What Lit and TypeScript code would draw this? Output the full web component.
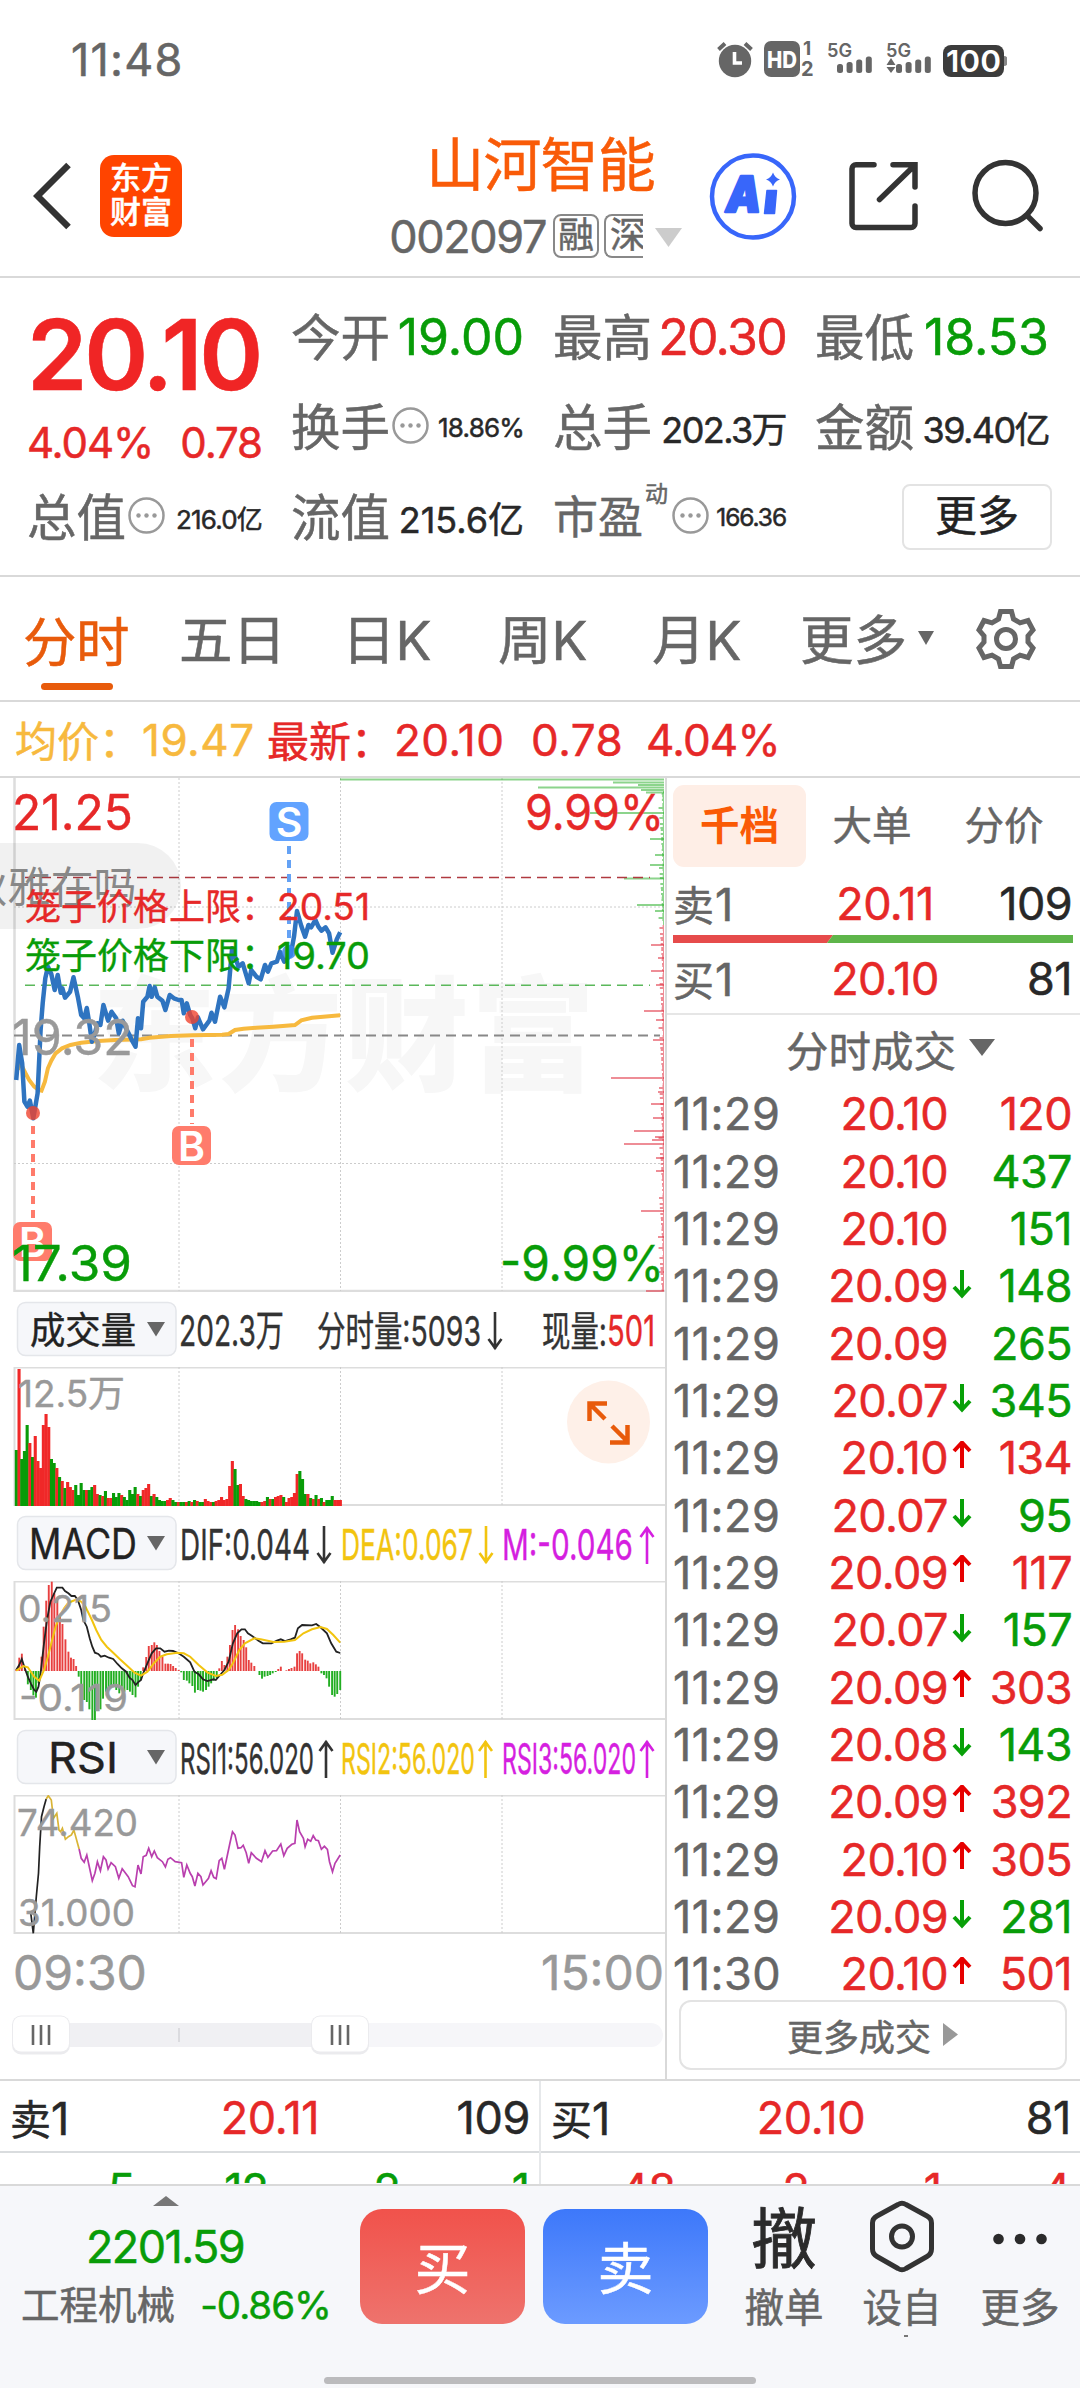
import { LitElement, html, svg, css, nothing } from 'lit';
import { customElement, property } from 'lit/decorators.js';

const RED = '#e62828';
const GREEN = '#089c08';

/* Series are stored on a fine grid: 2.34 units per px across, 3 units per px down. */
const line = (series: string, dy: number) =>
  series
    .trim()
    .split(/\s+/)
    .map((p) => {
      const [x, y] = p.split(',').map(Number);
      return `${(x / 2.34).toFixed(1)},${(y / 3 + dy).toFixed(1)}`;
    })
    .join(' ');

const PRICE = `38,930 42,870 45,825 52,880 57,995 64,1010 70,992 78,1045 88,970 95,780 100,700 106,625 112,590 120,612 128,660
 135,615 142,668 146,655 152,683 164,665 172,622 182,680 190,735 197,745 203,714 209,760 215,815 222,790 228,760 235,765 242,705 253,752
 261,725 272,745 278,790 287,752 293,770 303,795 309,812 317,830 323,745 330,775 335,695 345,680 350,648 355,680 362,652 368,680
 380,692 387,720 397,675 407,685 418,690 425,690 430,730 437,700 445,735 450,745 457,775 463,742 475,778 490,752 495,728
 503,755 515,680 525,712 535,655 543,535 558,590 568,580 582,640 588,600 600,620 610,628 620,585 627,605 635,580 648,575
 655,545 665,575 680,555 688,500 695,423 705,468 714,500 722,465 728,472 738,450 745,470 752,482 762,472 770,490 778,548
 788,508 796,487`;
const AVERAGE = `42,900 46,865 52,890 60,910 68,930 80,950 90,960 97,962 105,935 112,895 120,872 130,850 145,835 165,825 190,818 230,813
 270,810 330,808 350,803 400,798 450,796 520,794 535,792 550,780 570,776 600,773 640,770 690,765 705,751 730,743 796,736`;
const DIF = `38,480 45,465 51,447 58,475 65,500 72,520 80,540 85,545 90,530 95,490 103,400 110,330 118,275 125,255 133,233 146,233
 152,243 160,250 167,258 175,258 182,270 190,300 195,330 203,350 210,385 216,410 222,428 230,432 236,440 245,437 255,443 265,447
 275,462 285,475 295,485 303,503 310,510 317,525 323,517 330,510 335,490 345,460 355,430 365,415 375,415 385,425 395,422 405,423
 418,430 430,440 445,457 455,485 465,493 475,508 485,513 500,508 505,510 515,495 525,480 535,455 545,400 555,370 565,358 573,358
 580,370 590,378 605,392 615,400 635,400 648,392 657,388 667,393 680,388 690,383 697,355 707,345 730,346 740,342 750,352 765,370
 775,400 787,425 796,429`;
const DEA = `38,482 55,468 65,472 80,500 92,512 103,480 112,440 120,400 130,350 140,318 150,295 160,278 180,268 190,275 200,290
 215,330 225,360 237,390 250,410 265,428 280,447 300,470 315,488 330,497 345,485 360,460 375,440 390,433 415,428 430,430 445,440
 465,465 485,487 505,498 520,494 535,480 545,460 560,420 573,400 595,385 610,388 640,396 665,395 690,390 710,370 730,358 750,351
 765,357 780,375 796,398`;
const RSI_A = `72,550 78,610 85,500 90,430 93,350 97,260 103,230 108,207`;
const RSI_B = `108,207 113,197 120,210 125,265 133,250 138,300 142,305 146,295 153,328 160,320 167,315 173,300 185,357`;
const RSI_C = `185,357 190,385 197,397 203,375 209,410 216,452 222,430 228,395 235,422 242,380 248,390 253,417 260,398 270,410
 278,445 286,416 300,440 310,467 316,470 323,405 330,432 335,380 342,376 348,355 355,380 361,363 368,383 380,395 387,411 393,388
 399,383 410,395 425,398 430,442 437,405 445,430 450,440 456,468 463,430 470,440 475,465 488,445 494,422 500,442 506,446 513,392
 519,385 525,418 532,375 538,340 544,305 550,315 557,355 564,353 569,346 576,368 582,400 588,368 600,385 612,395 620,362 627,382
 638,363 647,362 657,342 664,377 672,355 683,343 690,340 695,270 701,305 710,325 714,350 720,328 727,334 733,317 739,330 745,332
 752,358 759,349 766,358 771,395 778,425 784,400 796,375`;

/* One entry per minute: r = up, g = down, followed by the bar height. */
const VOLUME = `g56 r137 g47 g55 g81 r63 g49 r70 r45 r38 r81 r92 r79 g47 g43 r38 g29 r25 g18 r24 r19 r16 g21 g11 g23 g16 r16 g16
 g19 r21 r12 g11 r10 g15 r8 r8 g13 g9 g13 r11 g9 g6 g16 g12 g19 r12 g10 r16 r18 r22 g10 r12 g9 g6 g5 g5 r6 r8 g6 g4 r4 g4 g4 r4 g5
 r4 g6 r5 g4 g4 r7 r5 r4 g4 r5 r6 r9 r6 r7 r20 r45 g37 g21 r22 r10 g7 g6 g5 g5 g5 g4 r4 r5 g9 r7 g7 r9 r10 r11 g9 r4 r8 r9 r13 r32
 g35 g27 g12 r12 g8 r7 g11 r7 g8 r4 g6 g6 g10 r6 r6 r6`.trim().split(/\s+/);

const MACD_BARS = `38,478 45,443 51,431 58,476 65,523 72,540 78,556 84,563 90,520 97,440 102,350 108,272 114,225 121,215 127,250 134,265
 140,320 146,342 153,388 160,425 166,443 172,447 178,468 184,500 190,530 197,570 203,576 209,598 216,630 222,630 228,600 235,598
 241,566 248,545 254,540 260,525 266,530 272,540 279,550 285,530 291,545 298,540 304,545 310,555 317,562 323,530 329,510 335,472
 342,441 348,408 355,405 361,397 367,405 373,423 380,440 387,461 393,461 399,462 405,468 411,474 418,480 424,487 430,510 437,512
 443,520 450,528 456,548 463,540 469,542 475,545 482,540 488,530 494,520 500,512 507,505 513,475 519,453 525,465 532,440 538,405
 544,360 550,345 557,358 563,378 570,390 576,412 582,450 588,458 595,468 607,495 613,506 619,500 626,498 632,495 638,490 645,486
 651,477 657,470 670,481 676,477 682,474 689,470 695,430 701,423 707,430 714,449 720,452 726,460 733,457 739,463 745,470 752,490
 758,495 764,505 770,530 777,555 783,560 789,552 796,540`.trim().split(/\s+/);

/* Price distribution along the right edge: [y, left end]. */
const DEPTH: [number, number][] = [
  [1.5, 340], [4.5, 613], [7, 638], [9.5, 538], [12, 641], [14.5, 646], [35, 590], [61, 650], [77, 655], [87, 650], [100.5, 624],
  [127, 637], [133, 655], [167, 651], [193, 651], [180, 658], [207, 656], [233, 644], [242, 656], [262, 653], [300, 611], [314, 658],
  [326, 651], [340, 653], [353, 634], [359, 655], [362, 652], [366, 624], [380, 656], [393, 656], [433, 641], [459, 658], [494, 659], [513, 646],
];

type Trade = [string, string, number, string, string];
const TRADES: Trade[] = [
  ['11:29', '20.10', 0, '120', 'r'], ['11:29', '20.10', 0, '437', 'g'], ['11:29', '20.10', 0, '151', 'g'],
  ['11:29', '20.09', -1, '148', 'g'], ['11:29', '20.09', 0, '265', 'g'], ['11:29', '20.07', -1, '345', 'g'],
  ['11:29', '20.10', 1, '134', 'r'], ['11:29', '20.07', -1, '95', 'g'], ['11:29', '20.09', 1, '117', 'r'],
  ['11:29', '20.07', -1, '157', 'g'], ['11:29', '20.09', 1, '303', 'r'], ['11:29', '20.08', -1, '143', 'g'],
  ['11:29', '20.09', 1, '392', 'r'], ['11:29', '20.10', 1, '305', 'r'], ['11:29', '20.09', -1, '281', 'g'],
  ['11:30', '20.10', 1, '501', 'r'],
];

const base = css`
  :host { display: block; font-family: Inter, 'Noto Sans CJK SC', sans-serif; color: #666; -webkit-text-stroke: 0.5px; }
  * { box-sizing: border-box; }
  svg { display: block; flex: none; -webkit-text-stroke: 0; }
  svg text { font-family: Inter, 'Noto Sans CJK SC', sans-serif; }
  .r { color: #e62828; }
  .g { color: #089c08; }
  .k { color: #282828; }
`;

const grid = (h: number) => svg`
  <path d="M179 0V${h}M340.5 0V${h}M502 0V${h}" stroke="#ccc" stroke-width="1" stroke-dasharray="2 2"/>`;

/* Text whose glyphs are condensed or stretched to an exact width. */
const label = (s: string, x: number, y: number, w: number, size: number, fill: string, weight = 400) => svg`
  <text x=${x} y=${y} font-size=${size} font-weight=${weight} fill=${fill} stroke=${fill} stroke-width="0.4" textLength=${w} lengthAdjust="spacingAndGlyphs">${s}</text>`;

@customElement('status-bar')
class StatusBar extends LitElement {
  static styles = [base, css`
    .bar { height: 118px; padding: 0 73px 0 71px; display: flex; align-items: center; justify-content: space-between; }
    .time { font-size: 45px; letter-spacing: 1.200px; }
  `];
  render() {
    const bars = (x: number) => [9, 11, 13.5, 16.5].map((h, i) => svg`<rect x=${x + i * 9.6} y=${39 - h} width="6" height=${h} rx="2.500" fill="#666"/>`);
    return html`<div class="bar">
      <span class="time">11:48</span>
      <svg width="292" height="50" viewBox="0 0 292 50">
        <g fill="#666">
          <circle cx="20" cy="27" r="16.200"/>
          <path d="M3.500 15.500 10 9.500M30 9.500l6.500 6" stroke="#666" stroke-width="4"/>
          <path d="M19.500 18V29H27" fill="none" stroke="#fff" stroke-width="3.600"/>
          <rect x="49" y="7" width="36" height="36" rx="7"/>
          <text x="52" y="34" font-size="23" font-weight="800" fill="#fff" textLength="30" lengthAdjust="spacingAndGlyphs">HD</text>
          <text x="88" y="21" font-size="19" font-weight="700">1</text>
          <text x="86" y="42" font-size="20" font-weight="700">2</text>
          <text x="112" y="23" font-size="19" font-weight="600" textLength="25" lengthAdjust="spacingAndGlyphs">5G</text>
          <text x="171" y="23" font-size="19" font-weight="600" textLength="25" lengthAdjust="spacingAndGlyphs">5G</text>
          <path d="M171.500 31l4.500-7 4.500 7zM171.500 33l4.500 6 4.500-6z"/>
        </g>
        ${bars(122)} ${bars(181)}
        <rect x="228" y="11" width="61" height="32" rx="8" fill="#3c3c3c"/>
        <path d="M289 22q4 0 4 5t-4 5z" fill="#888"/>
        <text x="231" y="38" font-size="30" font-weight="600" fill="#fff" textLength="55" lengthAdjust="spacingAndGlyphs">100</text>
      </svg>
    </div>`;
  }
}

@customElement('title-bar')
class TitleBar extends LitElement {
  static styles = [base, css`
    .bar { height: 160px; padding: 0 33px 3px; display: flex; align-items: center; border-bottom: 2px solid #d9d9d9; }
    .logo { width: 82px; height: 82px; margin-left: 29px; border-radius: 14px; background: #ff4400; color: #fff;
      font-size: 31px; font-weight: 500; line-height: 34px; text-align: center; padding-top: 6px; }
    .mid { flex: 1; display: flex; flex-direction: column; align-items: flex-end; padding-right: 24px; }
    .name { font-size: 58px; line-height: 66px; color: #f95b08; margin: 2px 28px 0 0; letter-spacing: -0.8px; }
    .code { display: flex; align-items: center; height: 50px; font-size: 45px; letter-spacing: -1.400px; margin-top: 13px; }
    .tag { width: 46px; height: 44px; margin-left: 7px; border: 2px solid #888; border-radius: 8px; font-size: 36px; line-height: 38px;
      letter-spacing: 0; text-align: center; overflow: hidden; white-space: nowrap; }
    .tag.cut { width: 39px; margin-left: 5px; border-right: 0; border-radius: 8px 0 0 8px; padding-left: 4px; text-align: left; }
    .caret { margin-left: 12px; margin-top: 4px; }
  `];
  render() {
    return html`<div class="bar">
      <svg width="38" height="70" viewBox="0 0 38 70"><path d="M35.500 4 4.500 35 35.500 66" fill="none" stroke="#333" stroke-width="6.500"/></svg>
      <div class="logo">东方<br>财富</div>
      <div class="mid">
        <div class="name">山河智能</div>
        <div class="code">002097<span class="tag">融</span><span class="tag cut">深</span>
          <svg class="caret" width="28" height="20"><path d="M0 0h27L13.500 19z" fill="#ccc"/></svg></div>
      </div>
      <svg width="340" height="90" viewBox="0 0 340 90">
        <circle cx="46" cy="45.500" r="41" fill="none" stroke="#3866fa" stroke-width="4.500"/>
        <text x="19" y="61" font-size="49" font-weight="900" fill="#3866fa" stroke="#3866fa" stroke-width="2.500" stroke-linejoin="round" font-style="italic" textLength="35" lengthAdjust="spacingAndGlyphs">A</text>
        <path d="M60 39.500h9.500L67.500 62.500H57.500z" fill="#3866fa" stroke="#3866fa" stroke-width="1.500" stroke-linejoin="round"/>
        <path d="M66 21.500q2 5.500 7 7-5 1.500-7 7-2-5.500-7-7 5-1.500 7-7z" fill="#3866fa"/>
        <g fill="none" stroke="#333" stroke-width="5.500" stroke-linecap="round" transform="translate(-1 0)">
          <path d="M168 13.700H150a4 4 0 0 0-4 4V72.500a4 4 0 0 0 4 4H205a4 4 0 0 0 4-4V55"/>
          <path d="M187 13.700H209V36M207 16 173.500 48.500"/>
          <circle cx="299.500" cy="42" r="30.500"/>
          <path d="M321 64.500 334 77.500"/>
        </g>
      </svg>
    </div>`;
  }
}

@customElement('quote-panel')
class QuotePanel extends LitElement {
  static styles = [base, css`
    .panel { height: 299px; border-bottom: 2px solid #d9d9d9; padding: 14px 29px 0 29px; display: grid; column-gap: 31px;
      grid-template-columns: 233px 231px 231px 232px; grid-template-rows: 90px 90px 90px; }
    .main { grid-row: span 2; display: flex; flex-direction: column; }
    .last { font-size: 97px; font-weight: 600; letter-spacing: -3.200px; line-height: 118px; margin: 4px 0 0 -2px; color: #f02525; }
    .chg { display: flex; justify-content: space-between; font-size: 42px; line-height: 54px; letter-spacing: -1.100px; margin: 2px 0 0 -2px; }
    .cell { display: flex; align-items: center; justify-content: space-between; font-size: 49.500px; white-space: nowrap; }
    .name { display: flex; align-items: center; padding-bottom: 6px; margin-left: -2px; }
    .big { font-size: 50px; letter-spacing: -1.700px; }
    .mid { font-size: 36px; letter-spacing: -1.600px; }
    .mid.open { letter-spacing: 0; }
    .big.open { letter-spacing: 0; }
    .small { font-size: 26px; letter-spacing: -0.800px; }
    .tiny { font-size: 24.500px; letter-spacing: -1.100px; }
    .sup { font-size: 23px; margin: -44px 2px 0 2px; }
    .pe { font-size: 45px; }
    .more { justify-self: end; align-self: center; width: 150px; height: 66px; border: 2px solid #e3e3e3; border-radius: 8px;
      font-size: 42px; line-height: 60px; text-align: center; color: #222; margin-right: -3px; }
    .info { margin: 3px 0 0 2px; }
  `];
  cell(name: string, value: string, size: string, color: string, info = false) {
    return html`<div class="cell"><span class="name">${name}${info ? this.info() : nothing}</span><span class="${size} ${color}">${value}</span></div>`;
  }
  info() {
    return html`<svg class="info" width="37" height="37"><circle cx="18.500" cy="18.500" r="17" fill="none" stroke="#999" stroke-width="2.500"/>
      <g fill="#999"><circle cx="10.500" cy="18.500" r="2.200"/><circle cx="18.500" cy="18.500" r="2.200"/><circle cx="26.500" cy="18.500" r="2.200"/></g></svg>`;
  }
  render() {
    return html`<div class="panel">
      <div class="main"><div class="last">20.10</div><div class="chg r"><span>4.04%</span><span>0.78</span></div></div>
      ${this.cell('今开', '19.00', 'big open', 'g')} ${this.cell('最高', '20.30', 'big', 'r')} ${this.cell('最低', '18.53', 'big open', 'g')}
      ${this.cell('换手', '18.86%', 'small', 'k', true)} ${this.cell('总手', '202.3万', 'mid', 'k')} ${this.cell('金额', '39.40亿', 'mid', 'k')}
      ${this.cell('总值', '216.0亿', 'small', 'k', true)} ${this.cell('流值', '215.6亿', 'mid open', 'k')}
      <div class="cell"><span class="name pe">市盈<span class="sup">动</span>${this.info()}</span><span class="tiny k">166.36</span></div>
      <div class="more">更多</div>
    </div>`;
  }
}

/* The tab row and the average line below it. */
@customElement('period-bar')
class PeriodBar extends LitElement {
  static styles = [base, css`
    .tabs { height: 125px; border-bottom: 2px solid #d9d9d9; padding-left: 23px; display: grid; align-items: center;
      grid-template-columns: 156px 163px 156px 151px 151px 175px 62px; font-size: 53.500px; white-space: nowrap; }
    .tab { height: 123px; line-height: 132px; display: flex; align-items: center; letter-spacing: 0; padding-top: 5px; }
    .on { color: #e85b0b; flex-direction: column; align-items: flex-start; padding-top: 0; letter-spacing: -0.5px; }
    .on::after { content: ''; width: 72px; height: 7px; border-radius: 4px; background: #e85b0b; margin: -26px 0 0 18px; }
    .tab.month { padding-left: 3px; }
    .caret { margin: -6px 0 0 11px; }
    .avg { height: 76px; border-bottom: 2px solid #d9d9d9; padding: 2px 0 0 15px; display: flex; align-items: center; font-size: 44px;
      letter-spacing: 0.5px; color: #f7b93e; white-space: pre; }
    .cn { letter-spacing: 0; font-size: 42px; padding-bottom: 3px; }
    .a { width: 127px; } .b { width: 125px; } .c { width: 127px; } .d { width: 137px; } .e { width: 115px; } .f { letter-spacing: -0.8px; }
  `];
  render() {
    return html`<div class="tabs">
        <span class="tab on">分时</span><span class="tab">五日</span><span class="tab">日K</span><span class="tab">周K</span><span class="tab month">月K</span>
        <span class="tab">更多<svg class="caret" width="16" height="14"><path d="M0 0h16L8 14z" fill="#666"/></svg></span>
        <svg width="62" height="62" viewBox="0 0 62 62"><g fill="none" stroke="#666" stroke-width="5">
          <path d="M25.500 3.500h11l2 7.500 6.500 3.800 8-2.300 5 9.500-5 6v6l5 6-5 9.500-8-2.300-6.500 3.800-2 7.500h-11l-2-7.500-6.500-3.800-8 2.300-5-9.500 5-6v-6l-5-6 5-9.500 8 2.300 6.500-3.800z"/>
          <circle cx="31" cy="31" r="9.500"/></g></svg>
      </div>
      <div class="avg"><span class="cn a">均价：</span><span class="b">19.47</span><span class="r cn c">最新：</span><span class="r d">20.10</span><span class="r e">0.78</span><span class="r f">4.04%</span></div>`;
  }
}

@customElement('indicator-head')
class IndicatorHead extends LitElement {
  @property() name = '';
  @property({ type: Number }) nameX = 30;
  @property({ type: Number }) nameWidth = 106;
  @property({ attribute: false }) items: [string, number, number, string, number?][] = [];
  static styles = [base, css`:host { height: 75px; }`];
  render() {
    return html`<svg width="665" height="75">
      <rect x="17.500" y="10.500" width="158.500" height="53" rx="8" fill="#f6f7fa" stroke="#e4e6ea" stroke-width="1.500"/>
      ${label(this.name, this.nameX, this.name === '成交量' ? 52 : 53, this.nameWidth, this.name === '成交量' ? 37 : 42, '#222')}
      <path d="M147 30h18l-9 14.500z" fill="#666"/>
      ${this.items.map(([s, x, w, c, arrow]) => svg`${label(s, x, 54, w, s.includes('量') ? 41 : 43, c)}
        ${arrow ? svg`<path transform="translate(${Math.abs(arrow)} 39) scale(1 ${arrow > 0 ? 1 : -1})" d="M0-18V19M-6.500-8 0-17 6.500-8" fill="none" stroke=${c} stroke-width="2.600"/>` : nothing}`)}
    </svg>`;
  }
}

@customElement('chart-panel')
class ChartPanel extends LitElement {
  static styles = [base, css`
    .axis { height: 76px; padding: 1px 1px 0 13px; display: flex; align-items: center; justify-content: space-between; font-size: 48px; color: #999; letter-spacing: 0; }
  `];
  frame(h: number) {
    return svg`<path d="M14 .750H665" stroke="#ddd" stroke-width="1.500"/>
      <path d="M14.500 0V${h - 1}H665" fill="none" stroke="#ddd" stroke-width="2"/>${grid(h)}`;
  }
  marker(x: number, y: number, s: string, color: string) {
    return svg`<rect x=${x - 19.5} y=${y - 19.5} width="39" height="39" rx="7" fill=${color}/>
      <text x=${x} y=${y + 15} font-size="41" font-weight="600" fill="#fff" text-anchor="middle">${s}</text>`;
  }
  price() {
    const fuzz = Array.from({ length: 250 }, (_, i) => [i * 2 + 14, 664 - 1 - ((i * 37) % 11) * ((i * 13) % 5) / 9] as [number, number]);
    return svg`
      <text x="92" y="303" font-size="124" font-weight="900" fill="#f7f7f7" textLength="503">东方财富</text>
      <path d="M14.500 0V513H665" fill="none" stroke="#ddd" stroke-width="2.500"/>
      ${grid(513)}
      <path d="M14 129H664M14 385.500H664" stroke="#ccc" stroke-dasharray="2 2"/>
      ${[...DEPTH, ...fuzz].map(([y, x]) => svg`<path d="M${x} ${y}H664" stroke=${y < 148 ? '#2db02d' : '#e03040'} stroke-opacity=".55" stroke-width="2"/>`)}
      <path d="M25 99.500H650" stroke="#b03a40" stroke-width="1.600" stroke-dasharray="10 6"/>
      <path d="M25 207.300H650" stroke="#5bb85b" stroke-width="1.600" stroke-dasharray="10 6"/>
      <path d="M14 257.500H660" stroke="#888" stroke-width="2" stroke-dasharray="10 6"/>
      <polyline points=${line(AVERAGE, -8)} fill="none" stroke="#f7b93e" stroke-width="4"/>
      <polyline points=${line(PRICE, -8)} fill="none" stroke="#2f74c0" stroke-width="4.500" stroke-linejoin="round"/>
      <g fill="none" stroke-width="4" stroke-dasharray="8 6">
        <path d="M289 68V166" stroke="#64a2f5"/><path d="M192 261V346M33 348V440" stroke="#ff7b6b"/>
      </g>
      <circle cx="289" cy="174" r="7" fill="#3b86f0" opacity=".85"/>
      <g fill="#f0442f" opacity=".8"><circle cx="192" cy="239" r="7"/><circle cx="33" cy="335" r="7"/></g>
      ${this.marker(289, 43.5, 'S', '#62a3ff')} ${this.marker(191.5, 367.5, 'B', '#ff7c6c')} ${this.marker(32.5, 463.5, 'B', '#ff7c6c')}
      <path d="M0 65H138a43 43 0 0 1 0 86H0z" fill="#000" fill-opacity=".055"/>
      <text x="-35.500" y="124.500" font-size="43" fill="#888">狄雅在吗</text>
      ${label('21.25', 12, 52, 121, 49, RED)} ${label('9.99%', 525, 52, 139, 49, RED)}
      ${label('17.39', 12, 503, 120, 49, GREEN)} ${label('-9.99%', 500, 503, 164, 49, GREEN)}
      ${label('19.32', 12, 277, 121, 49, '#999')}
      ${label('笼子价格上限：', 25, 142, 252, 36, RED)} ${label('20.51', 277, 142, 93, 37, RED)}
      ${label('笼子价格下限：', 25, 191, 252, 36, GREEN)} ${label('19.70', 277, 191, 93, 37, GREEN)}
    `;
  }
  render() {
    return html`
      <svg width="665" height="514">${this.price()}</svg>
      <indicator-head name="成交量" .items=${[['202.3万', 179, 105, '#333'], ['分时量:5093', 317, 164, '#333', -495], ['现量:', 542, 65, '#333'], ['501', 607, 48, RED]]}></indicator-head>
      <svg width="665" height="139">${this.frame(139)}
        ${VOLUME.map((v, i) => svg`<rect x=${14.8 + i * 2.7} y=${139 - +v.slice(1)} width="3.100" height=${+v.slice(1)} fill=${v[0] === 'r' ? '#f02828' : '#089c08'}/>`)}
        ${label('12.5万', 18, 40, 107, 37, '#999')}
        <circle cx="608.500" cy="55" r="41.500" fill="#fef0e8"/>
        <path d="M605 52 590 37M589.500 54V36.500H607M612 59 627 74M610 75.500H627.500V58" fill="none" stroke="#e85b0b" stroke-width="4.500"/>
      </svg>
      <indicator-head name="MACD" nameX="29" nameWidth="108" .items=${[['DIF:0.044', 180, 130, '#333', -324], ['DEA:0.067', 341, 132, '#f2c40f', -486], ['M:-0.046', 502, 131, '#d51fe0', 647]]}></indicator-head>
      <svg width="665" height="139">${this.frame(139)}
        ${MACD_BARS.map((b) => {
          const [x, y] = b.split(',').map((n) => +n);
          const h = Math.abs(y - 483) / 3;
          return svg`<rect x=${x / 2.34 - 0.9} y=${y < 483 ? 90 - h : 90} width="1.900" height=${h} fill=${y < 483 ? '#e84040' : '#22ae22'}/>`;
        })}
        <polyline points=${line(DIF, -71)} fill="none" stroke="#222" stroke-width="1.800"/>
        <polyline points=${line(DEA, -71)} fill="none" stroke="#f2c40f" stroke-width="2"/>
        ${label('0.215', 18, 41, 94, 37, '#999')} ${label('-0.119', 19, 130, 109, 37, '#999')}
      </svg>
      <indicator-head name="RSI" nameX="48" nameWidth="70" .items=${[['RSI1:56.020', 180, 134, '#333', 326], ['RSI2:56.020', 341, 134, '#f2c40f', 485.5], ['RSI3:56.020', 502, 134, '#d51fe0', 647]]}></indicator-head>
      <svg width="665" height="139">${this.frame(139)}
        <g fill="none" stroke-width="1.700">
          <polyline points=${line(RSI_A, -65)} stroke="#222"/><polyline points=${line(RSI_B, -65)} stroke="#d9b436"/><polyline points=${line(RSI_C, -65)} stroke="#b93fae"/>
        </g>
        ${label('74.420', 17, 41, 121, 37, '#999')} ${label('31.000', 18, 131, 117, 37, '#999')}
      </svg>
      <div class="axis"><span>09:30</span><span>15:00</span></div>
      <svg width="665" height="69">
        <rect x="14" y="13" width="649" height="24" rx="12" fill="#f6f6f9"/><path d="M14 13H340V37H14z" fill="#f0f0f3"/><path d="M179 18V32" stroke="#d4d4d8" stroke-width="1.500"/>
        ${[41, 340].map((x) => svg`<rect x=${x - 29} y="5.500" width="58" height="39" rx="9" fill="#ebebee"/>
          <rect x=${x - 28} y="6.500" width="56" height="35" rx="8" fill="#fff"/>
          <path d="M${x - 8} 15V35M${x} 15V35M${x + 8} 15V35" stroke="#666" stroke-width="2.600"/>`)}
      </svg>`;
  }
}

@customElement('order-panel')
class OrderPanel extends LitElement {
  static styles = [base, css`
    :host { border-left: 2px solid #d9d9d9; letter-spacing: -0.600px; }
    .tabs { margin: 7px 0 0 6px; display: grid; grid-template-columns: 133px 132px 132px; height: 79px; line-height: 82px; text-align: center; font-size: 39.500px; letter-spacing: 0; }
    .on { background: #feeee6; color: #fa5a05; font-weight: 700; border-radius: 11px; -webkit-text-stroke: 0; }
    .row { display: grid; grid-template-columns: 152px 120px 1fr; align-items: center; padding: 0 8px 0 6px; font-size: 45px; }
    .row > :nth-child(2) { text-align: center; } .row > :last-child { text-align: right; }
    .sell { height: 71px; padding-top: 7px; } .buy { height: 70px; }
    .cn { font-size: 41px; letter-spacing: 1px; }
    .ratio { display: block; margin-left: 6px; }
    .head { border-top: 2px solid #e6e6e6; height: 73px; display: flex; align-items: center; font-size: 42.500px; letter-spacing: 0; gap: 13px; padding: 0 0 5px 119px; margin-bottom: -1px; }
    .trade { height: 57.350px; display: grid; grid-template-columns: 142px 133px 30px 1fr; align-items: center; padding: 0 8px 0 6px; font-size: 45px; }
    .trade :first-child { letter-spacing: 0.500px; }
    .trade .p, .trade .q { text-align: right; }
    .more { margin: -3px 13px 0 12px; height: 70px; border: 2px solid #e3e3e3; border-radius: 12px; display: flex; align-items: center; justify-content: center; gap: 12px; font-size: 36px; letter-spacing: 0; }
  `];
  render() {
    return html`
      <div class="tabs"><span class="on">千档</span><span>大单</span><span>分价</span></div>
      <div class="row sell"><span><span class="cn">卖</span>1</span><span class="r">20.11</span><span class="k">109</span></div>
      <svg class="ratio" width="400" height="8"><path d="M0 0H160L154 8H0z" fill="#e64b4b"/><path d="M160 0H400V8H154z" fill="#5eb54a"/></svg>
      <div class="row buy"><span><span class="cn">买</span>1</span><span class="r">20.10</span><span class="k">81</span></div>
      <div class="head">分时成交<svg width="26" height="18"><path d="M0 0h26L13 17z" fill="#666"/></svg></div>
      ${TRADES.map(([time, price, dir, qty, c]) => html`<div class="trade"><span>${time}</span><span class="p r">${price}</span>
        ${dir ? html`<svg width="30" height="34" viewBox="0 0 30 34"><path transform=${dir > 0 ? '' : 'rotate(180 14 14)'} d="M14 1V27M6 10 14 1.500 22 10" fill="none" stroke=${dir > 0 ? '#e60000' : '#08a008'} stroke-width="4"/></svg>` : html`<i></i>`}
        <span class="q ${c}">${qty}</span></div>`)}
      <div class="more">更多成交<svg width="16" height="24"><path d="M0 0 15 11.500 0 23z" fill="#999"/></svg></div>`;
  }
}

@customElement('depth-table')
class DepthTable extends LitElement {
  static styles = [base, css`
    .table { height: 107px; overflow: hidden; border-top: 2px solid #d9d9d9; border-bottom: 2px solid #d9d9d9; display: grid; grid-template-columns: 539px 541px; }
    .side + .side { border-left: 2px solid #e6e8ea; }
    .row { height: 72px; border-bottom: 2px solid #d9dcde; display: grid; grid-template-columns: 150px 1fr 150px; align-items: center; padding: 2px 9px 0 10px; font-size: 45px; letter-spacing: -0.400px; }
    .row > :nth-child(2) { text-align: center; } .row > :last-child { text-align: right; }
    .queue { display: grid; grid-template-columns: 134px 134px 132px 129px; line-height: 52px; padding-top: 11px; font-size: 45px; text-align: right; letter-spacing: -1px; }
    .cn { font-size: 41px; letter-spacing: 0; }
  `];
  side(name: string, price: string, qty: string, queue: string[], c: string) {
    return html`<div class="side"><div class="row k"><span><span class="cn">${name}</span>1</span><span class="r">${price}</span><span>${qty}</span></div>
      <div class="queue ${c}">${queue.map((q) => html`<span>${q}</span>`)}</div></div>`;
  }
  render() {
    return html`<div class="table">${this.side('卖', '20.11', '109', ['5', '12', '2', '1'], 'g')}${this.side('买', '20.10', '81', ['48', '2', '1', '4'], 'r')}</div>`;
  }
}

@customElement('action-bar')
class ActionBar extends LitElement {
  static styles = [base, css`
    :host { background: #f6f7fa; }
    .bar { height: 185px; display: grid; grid-template-columns: 360px 165px 183px 1fr; }
    .index { display: flex; flex-direction: column; align-items: center; padding: 10px 8px 0 0; }
    .num { font-size: 45px; line-height: 54px; margin-top: 14px; letter-spacing: -1.600px; padding-right: 22px; }
    .caret { margin-right: 21px; }
    .name { display: flex; align-items: center; gap: 25px; font-size: 38.500px; line-height: 50px; margin-top: 6px; white-space: nowrap; }
    .pct { letter-spacing: -1px; }
    .btn { width: 165px; height: 115px; margin-top: 23px; border-radius: 22px; color: #fff; font-size: 56px; line-height: 121px; text-align: center; }
    .buy { background: linear-gradient(#f1524b, #ee736d); }
    .sell { background: linear-gradient(#3d78fa, #6c9bff); margin-left: 18px; }
    .tools { display: grid; grid-template-columns: 118px 118px 118px; padding-left: 17px; }
    .tool { display: flex; flex-direction: column; align-items: center; font-size: 39.500px; white-space: nowrap; padding-top: 14px; }
    .ico { height: 76px; font-size: 66px; line-height: 79px; color: #2b2b2b; -webkit-text-stroke: 0.8px; }
    .txt { line-height: 52px; margin-top: 6px; }
    .dot { width: 4px; height: 2px; background: #777; margin: 1px 0 0 7px; }
    .home { width: 432px; height: 7px; margin: 6px auto 0; border-radius: 4px; background: #bbbbbd; }
  `];
  render() {
    return html`<div class="bar">
        <div class="index"><svg class="caret" width="26" height="10"><path d="M0 10 13 0 26 10z" fill="#777"/></svg>
          <div class="num g">2201.59</div><div class="name"><span>工程机械</span><span class="pct g">-0.86%</span></div></div>
        <div class="btn buy">买</div><div class="btn sell">卖</div>
        <div class="tools">
          <div class="tool"><div class="ico">撤</div><div class="txt">撤单</div></div>
          <div class="tool"><svg class="ico" width="66" height="76" viewBox="0 0 66 76"><g fill="none" stroke="#333" stroke-width="5"><path d="M29 4.500q4-2.500 8 0L58 16q4.500 2.500 4.500 7V49q0 5-4.500 7.500L37 68.500q-4 2.500-8 0L8 56.500Q3.500 54 3.500 49V23q0-4.500 4.500-7z"/><circle cx="33" cy="36.500" r="10.500"/></g></svg><div class="txt">设自</div><div class="dot"></div></div>
          <div class="tool"><svg class="ico" width="60" height="76" viewBox="0 0 60 76"><g fill="#2b2b2b"><circle cx="8.500" cy="39" r="5.300"/><circle cx="30" cy="39" r="5.300"/><circle cx="51.500" cy="39" r="5.300"/></g></svg><div class="txt">更多</div></div>
        </div>
      </div><div class="home"></div>`;
  }
}

@customElement('app-root')
class AppRoot extends LitElement {
  static styles = [base, css`
    :host { width: 1080px; height: 2388px; background: #fff; overflow: hidden; }
    .page { height: 2388px; display: flex; flex-direction: column; }
    .market { height: 1301px; display: grid; grid-template-columns: 665px 415px; flex: none; overflow: hidden; }
    action-bar { flex: 1; }
  `];
  render() {
    return html`<div class="page">
      <status-bar></status-bar><title-bar></title-bar><quote-panel></quote-panel><period-bar></period-bar>
      <div class="market"><chart-panel></chart-panel><order-panel></order-panel></div>
      <depth-table></depth-table><action-bar></action-bar>
    </div>`;
  }
}
